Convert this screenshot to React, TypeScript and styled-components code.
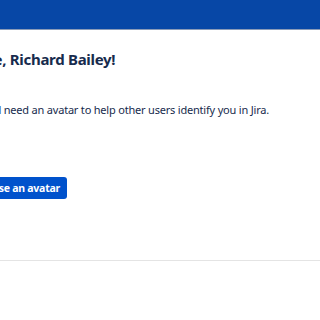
import React from "react";
import styled, { createGlobalStyle } from "styled-components";

const Global = createGlobalStyle`
  html, body { margin: 0; padding: 0; background: #fff; overflow: hidden; }
  body { font-family: "Noto Sans", "Open Sans", sans-serif; color: #172b4d; }
`;

const Page = styled.div`
  width: 320px;
  height: 320px;
  display: flex;
  flex-direction: column;
  overflow: hidden;
`;

const TopBar = styled.header`
  height: 29px;
  background: #0747a6;
  border-bottom: 1px solid #8a9bb8;
  flex: none;
`;

const Content = styled.main`
  display: flex;
  flex-direction: column;
  align-items: flex-start;
  margin-left: -64px;
  padding-top: 18px;
`;

const Heading = styled.h1`
  margin: 0;
  font-size: 15px;
  letter-spacing: -0.3px;
  font-weight: 700;
  line-height: 22px;
  white-space: nowrap;
  color: #172b4d;
`;

const Lead = styled.p<{ $indent: number }>`
  margin: 32px 0 0 ${(p) => p.$indent}px;
  font-size: 11px;
  letter-spacing: -0.2px;
  line-height: 16px;
  white-space: nowrap;
  color: #172b4d;
`;

const Button = styled.button<{ $indent: number }>`
  margin: 59px 0 0 ${(p) => p.$indent}px;
  height: 22px;
  padding: 0 7px;
  border: none;
  border-radius: 3px;
  background: #0052cc;
  color: #fff;
  font-family: inherit;
  font-size: 10.5px;
  letter-spacing: -0.25px;
  font-weight: 700;
  white-space: nowrap;
`;

const Divider = styled.hr`
  margin: 61px 0 0;
  border: none;
  border-top: 1px solid #e4e4e4;
  width: 420px;
`;

export default function App() {
  return (
    <>
      <Global />
      <Page>
        <TopBar />
        <Content>
          <Heading>Welcome, Richard Bailey!</Heading>
          <Lead $indent={39}>You'll need an avatar to help other users identify you in Jira.</Lead>
          <Button $indent={30}>Choose an avatar</Button>
          <Divider />
        </Content>
      </Page>
    </>
  );
}
